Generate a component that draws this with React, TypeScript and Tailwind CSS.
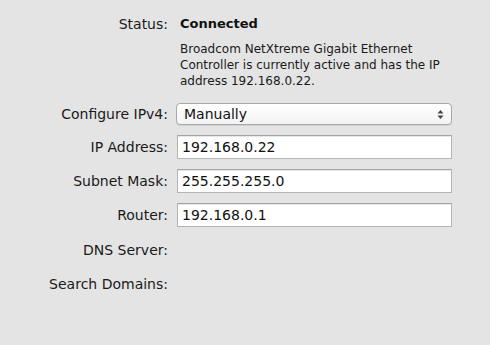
import React from 'react';

const FONT = "font-['DejaVu_Sans',sans-serif]";

const Label: React.FC<{ children: React.ReactNode; className?: string }> = ({ children, className = '' }) => (
  <div className={`text-right text-[14px] text-[#1a1a1a] ${className}`}>{children}</div>
);

const Field: React.FC<{ value: string }> = ({ value }) => (
  <div className="h-[24px] border border-[#b5b5b5] border-t-[#a3a3a3] bg-white px-[4px] flex items-center text-[14px] text-[#111] shadow-[inset_0_1px_0_#e8e8e8]">
    {value}
  </div>
);

export default function App() {
  return (
    <div className={`w-[490px] h-[345px] bg-[#e4e4e4] ${FONT} overflow-hidden`}>
      <div className="grid grid-cols-[168px_276px] gap-x-[8px] pt-[15px]">
        <Label className="leading-[18px]">Status:</Label>
        <div className="pl-[4px] text-[13px] font-bold leading-[18px] text-[#111]">Connected</div>

        <div />
        <div className="pl-[4px] pt-[8px] w-[266px] text-[12px] leading-[16px] text-[#1a1a1a]">
          Broadcom NetXtreme Gigabit Ethernet Controller is currently active and has the IP address 192.168.0.22.
        </div>

        <Label className="self-center pt-[14px]">Configure IPv4:</Label>
        <div className="pt-[14px]">
          <div className="h-[22px] rounded-[4px] border border-[#a9a9a9] bg-gradient-to-b from-white to-[#f3f3f3] shadow-[0_1px_0_#d0d0d0] flex items-center justify-between pl-[7px] pr-[7px] text-[14px] text-[#111]">
            <span>Manually</span>
            <svg width="7" height="11" viewBox="0 0 7 11">
              <path d="M3.5 1 L6.5 4.5 L0.5 4.5 Z" fill="#444" />
              <path d="M3.5 10 L6.5 6.5 L0.5 6.5 Z" fill="#444" />
            </svg>
          </div>
        </div>

        <Label className="self-center pt-[10px]">IP Address:</Label>
        <div className="pt-[10px] pl-[1px]"><Field value="192.168.0.22" /></div>

        <Label className="self-center pt-[10px]">Subnet Mask:</Label>
        <div className="pt-[10px] pl-[1px]"><Field value="255.255.255.0" /></div>

        <Label className="self-center pt-[10px]">Router:</Label>
        <div className="pt-[10px] pl-[1px]"><Field value="192.168.0.1" /></div>

        <Label className="pt-[13px]">DNS Server:</Label>
        <div />

        <Label className="pt-[13px]">Search Domains:</Label>
        <div />
      </div>
    </div>
  );
}
